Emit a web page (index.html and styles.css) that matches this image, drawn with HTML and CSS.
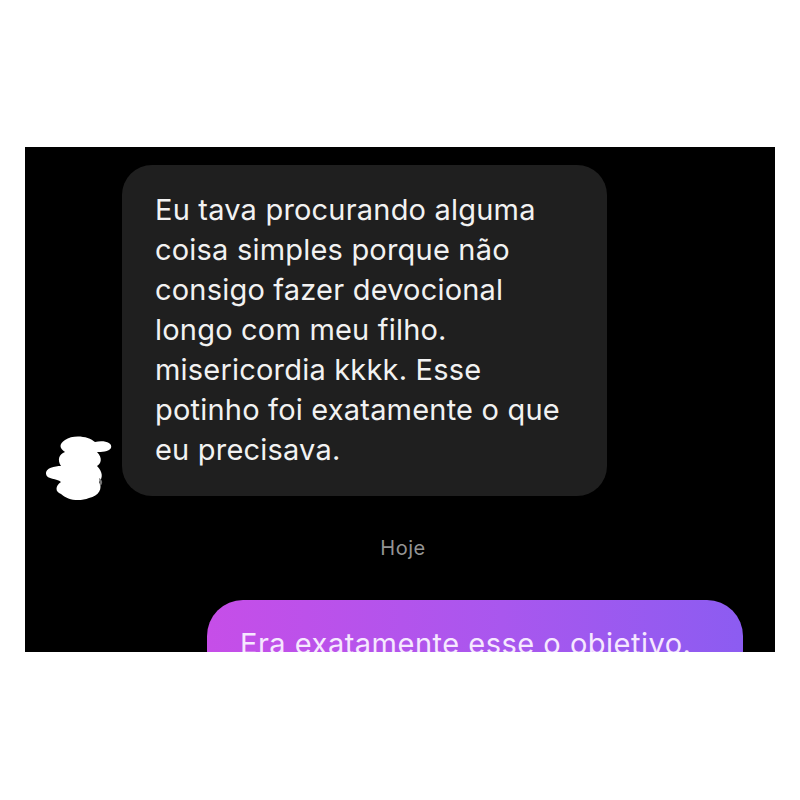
FILE: index.html
```html
<!DOCTYPE html>
<html lang="pt">
<head>
<meta charset="utf-8">
<link rel="stylesheet" href="styles.css">
</head>
<body>
<div class="screen">
  <div class="row-in">
    <div class="avatar">
      <svg width="72" height="68" viewBox="0 0 72 68">
        <path d="M20 6 C28 0 44 2 50 8 C58 6 68 8 66 14 C64 18 56 18 52 18 C58 24 56 30 52 32 C58 38 58 44 54 48 C58 54 54 62 44 64 C34 68 22 66 16 60 C10 58 10 52 16 48 C12 44 2 46 1 40 C0 34 10 32 16 32 C12 26 14 20 20 18 C14 14 14 10 20 6 Z" fill="#fff"/>
        <path d="M54 44 C58 46 58 50 55 52 Z" fill="#777"/>
      </svg>
    </div>
    <div class="bubble-in">Eu tava procurando alguma<br>coisa simples porque não<br>consigo fazer devocional<br>longo com meu filho.<br>misericordia kkkk. Esse<br>potinho foi exatamente o que<br>eu precisava.</div>
  </div>
  <div class="day">Hoje</div>
  <div class="row-out">
    <div class="bubble-out">Era exatamente esse o objetivo.</div>
  </div>
</div>
</body>
</html>
```

FILE: styles.css
```css
html, body {
  margin: 0;
  padding: 0;
  background: #fff;
}
.screen {
  margin: 147px 0 0 25px;
  width: 750px;
  height: 505px;
  background: #000;
  overflow: hidden;
  font-family: "Inter", "DejaVu Sans", sans-serif;
  box-sizing: border-box;
  padding-top: 18px;
}
.row-in {
  display: flex;
  align-items: flex-end;
  gap: 9px;
  padding-left: 20px;
}
.avatar {
  width: 68px;
  height: 68px;
  flex: none;
  margin-bottom: -6px;
}
.bubble-in {
  background: #1f1f1f;
  color: #f2f2f2;
  border-radius: 30px;
  padding: 25px 36px 26px 33px;
  font-size: 29px;
  letter-spacing: 0.2px;
  line-height: 40px;
  width: 416px;
  white-space: nowrap;
}
.day {
  text-align: center;
  color: #949494;
  font-size: 20px;
  letter-spacing: 0.5px;
  margin: 38px 0 0 6px;
  line-height: 28px;
}
.row-out {
  display: flex;
  justify-content: flex-end;
  padding-right: 32px;
  margin-top: 38px;
}
.bubble-out {
  width: 536px;
  box-sizing: border-box;
  background: linear-gradient(90deg, #c64ee8 0%, #a957ee 55%, #8c5cf1 100%);
  color: #f6e8ff;
  border-radius: 36px;
  padding: 24px 33px;
  font-size: 29px;
  letter-spacing: 0.5px;
  line-height: 40px;
  white-space: nowrap;
}
```
